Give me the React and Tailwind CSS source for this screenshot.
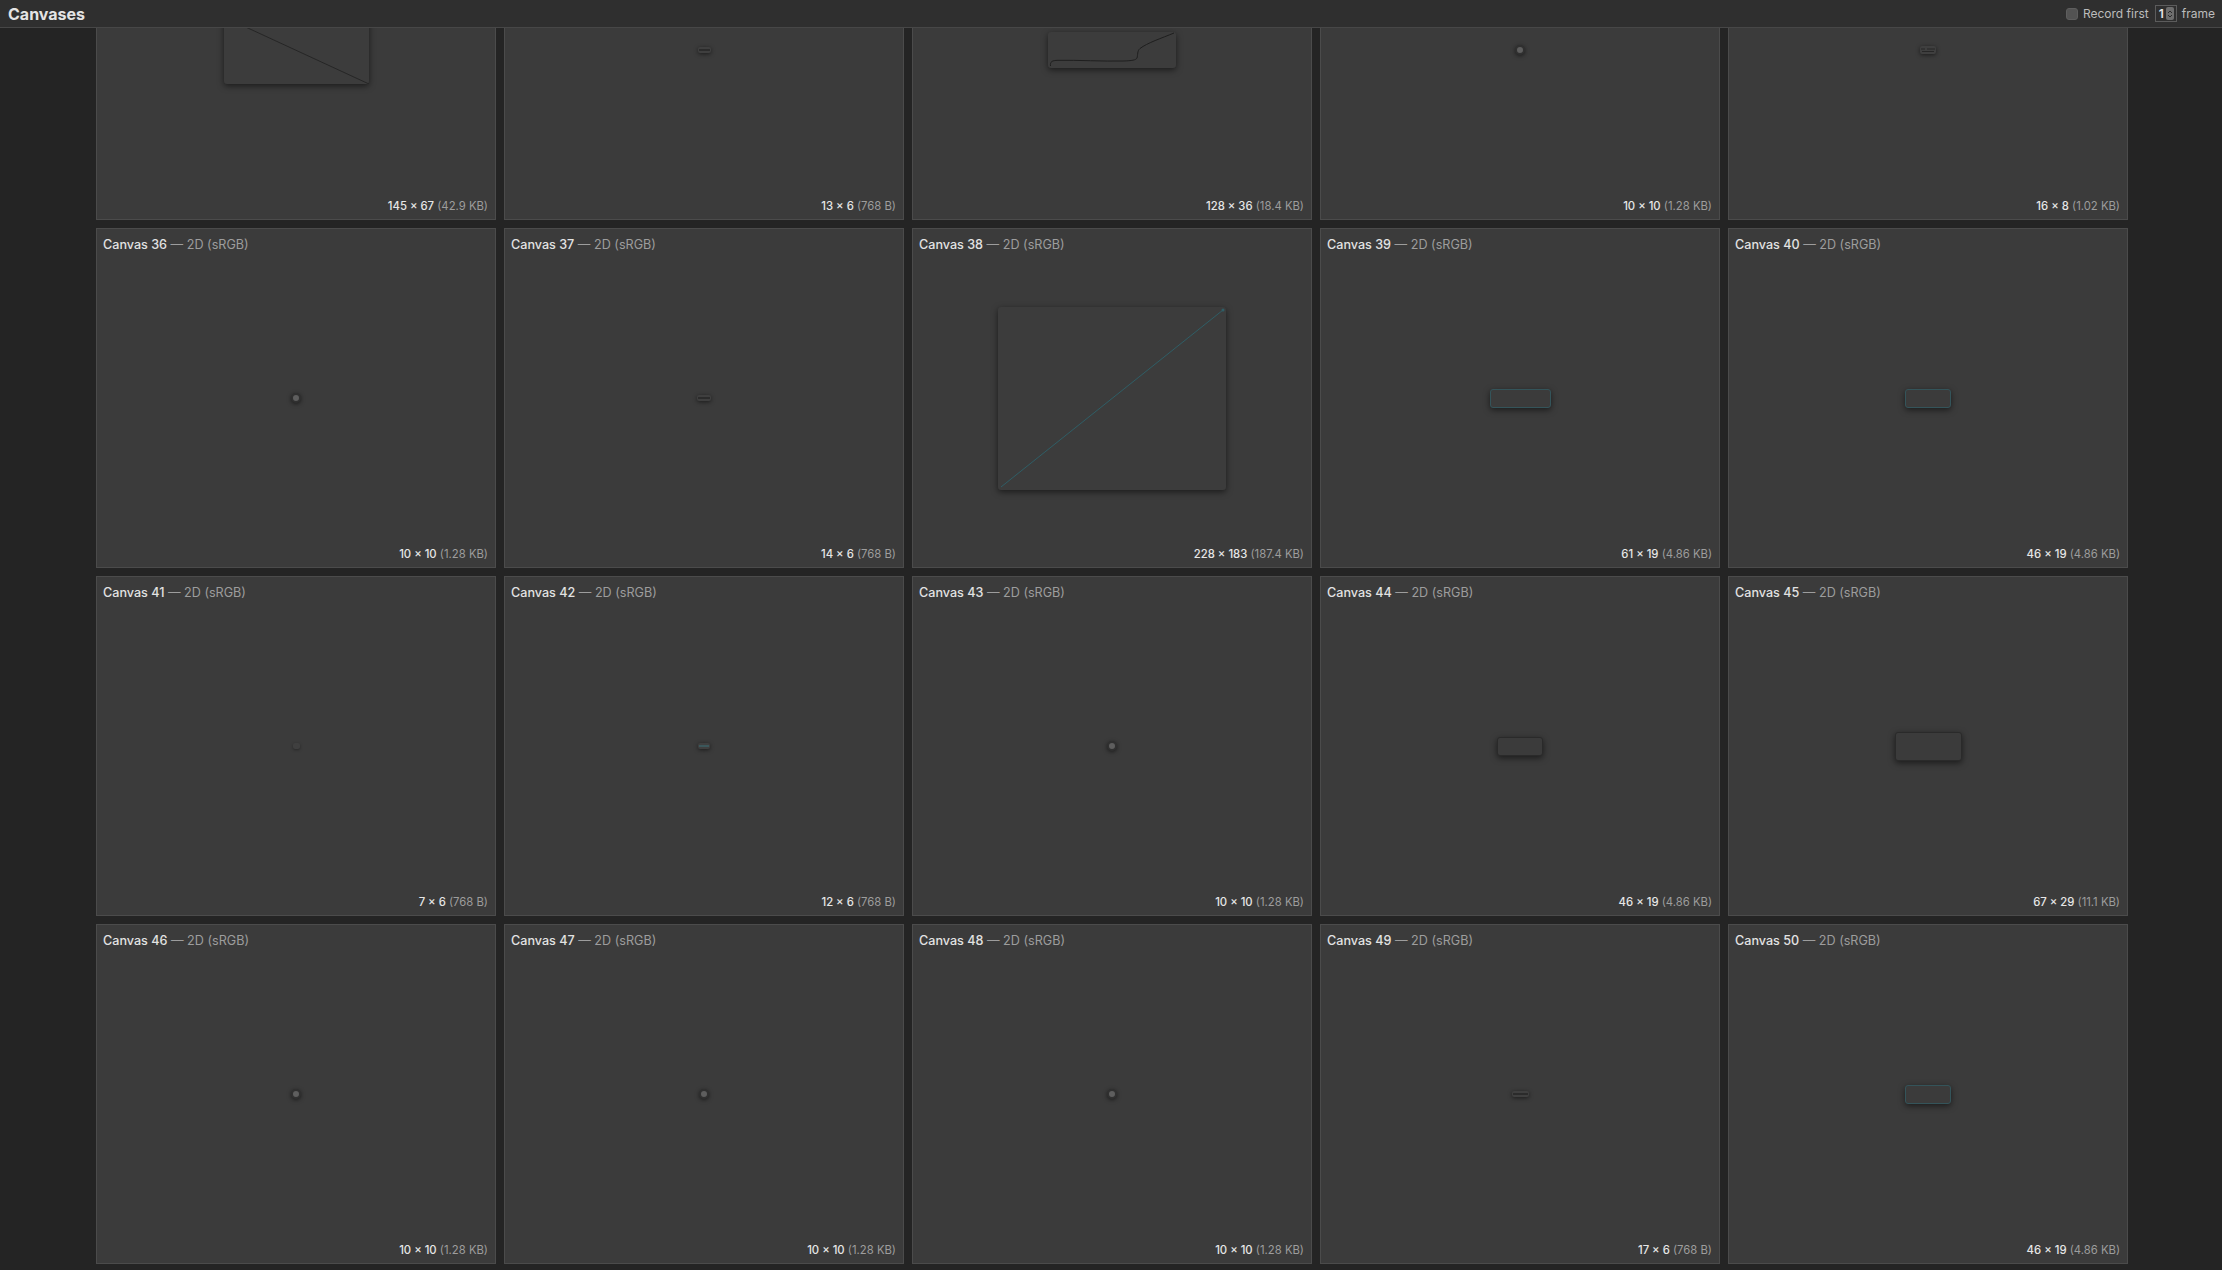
import React from 'react';

const rows = [
  [
    { n: 31, size: '145 × 67', kb: '(42.9 KB)', w: 145, h: 67, kind: 'diag' },
    { n: 32, size: '13 × 6', kb: '(768 B)', w: 13, h: 6, kind: 'dash' },
    { n: 33, size: '128 × 36', kb: '(18.4 KB)', w: 128, h: 36, kind: 'curve' },
    { n: 34, size: '10 × 10', kb: '(1.28 KB)', w: 10, h: 10, kind: 'dot' },
    { n: 35, size: '16 × 8', kb: '(1.02 KB)', w: 16, h: 8, kind: 'dash2' }
  ],
  [
    { n: 36, size: '10 × 10', kb: '(1.28 KB)', w: 10, h: 10, kind: 'dot' },
    { n: 37, size: '14 × 6', kb: '(768 B)', w: 14, h: 6, kind: 'dash' },
    { n: 38, size: '228 × 183', kb: '(187.4 KB)', w: 228, h: 183, kind: 'teal' },
    { n: 39, size: '61 × 19', kb: '(4.86 KB)', w: 61, h: 19, kind: 'boxTeal' },
    { n: 40, size: '46 × 19', kb: '(4.86 KB)', w: 46, h: 19, kind: 'boxTeal' }
  ],
  [
    { n: 41, size: '7 × 6', kb: '(768 B)', w: 7, h: 6, kind: 'faint' },
    { n: 42, size: '12 × 6', kb: '(768 B)', w: 12, h: 6, kind: 'dashTeal' },
    { n: 43, size: '10 × 10', kb: '(1.28 KB)', w: 10, h: 10, kind: 'dot' },
    { n: 44, size: '46 × 19', kb: '(4.86 KB)', w: 46, h: 19, kind: 'boxGray' },
    { n: 45, size: '67 × 29', kb: '(11.1 KB)', w: 67, h: 29, kind: 'boxGray' }
  ],
  [
    { n: 46, size: '10 × 10', kb: '(1.28 KB)', w: 10, h: 10, kind: 'dot' },
    { n: 47, size: '10 × 10', kb: '(1.28 KB)', w: 10, h: 10, kind: 'dot' },
    { n: 48, size: '10 × 10', kb: '(1.28 KB)', w: 10, h: 10, kind: 'dot' },
    { n: 49, size: '17 × 6', kb: '(768 B)', w: 17, h: 6, kind: 'dash' },
    { n: 50, size: '46 × 19', kb: '(4.86 KB)', w: 46, h: 19, kind: 'boxTeal' }
  ]
];

const Preview = ({ c }) => {
  const dims = { width: c.w, height: c.h };

  if (c.kind === 'dot') {
    return (
      <div
        style={dims}
        className="rounded-full bg-[#5e5e5e] border-2 border-[#303030] shadow-[0_1px_4px_rgba(0,0,0,0.55)]"
      />
    );
  }

  if (c.kind === 'faint') {
    return <div style={dims} className="rounded-[2px] bg-[#3f3f3f] shadow-[0_1px_3px_rgba(0,0,0,0.35)]" />;
  }

  if (c.kind === 'dash' || c.kind === 'dashTeal' || c.kind === 'dash2') {
    const line = c.kind === 'dashTeal' ? '#3b6166' : '#262626';
    return (
      <div style={dims} className="rounded-[2px] bg-[#3f3f3f] shadow-[0_1px_4px_rgba(0,0,0,0.55)]">
        <svg width={c.w} height={c.h} viewBox={`0 0 ${c.w} ${c.h}`} className="block">
          {c.kind === 'dash2' ? (
            <>
              <line x1="1" y1="3" x2="5" y2="3" stroke={line} strokeWidth="1" />
              <line x1="7" y1="3" x2="15" y2="3" stroke={line} strokeWidth="1" />
              <line x1="2" y1="5.5" x2="14" y2="5.5" stroke={line} strokeWidth="1" />
            </>
          ) : (
            <line x1="1" y1={c.h / 2} x2={c.w - 1} y2={c.h / 2} stroke={line} strokeWidth="1.5" />
          )}
        </svg>
      </div>
    );
  }

  if (c.kind === 'boxTeal' || c.kind === 'boxGray') {
    const edge = c.kind === 'boxTeal' ? 'border-[#34545a]' : 'border-[#2a2a2a]';
    return (
      <div
        style={dims}
        className={`rounded-[3px] border ${edge} bg-[#3b3b3b] shadow-[0_2px_6px_rgba(0,0,0,0.55)]`}
      />
    );
  }

  return (
    <div style={dims} className="rounded-[3px] bg-[#3c3c3c] shadow-[0_2px_6px_rgba(0,0,0,0.55)]">
      <svg width={c.w} height={c.h} viewBox={`0 0 ${c.w} ${c.h}`} className="block">
        {c.kind === 'diag' && <line x1="0" y1="0" x2={c.w} y2={c.h} stroke="#262626" strokeWidth="1" />}
        {c.kind === 'curve' && (
          <path
            d="M2.5 34 C2 29.5 4 28.5 10 28.3 C30 28 55 29.5 75 29 C84 28.8 88 28 89 26 C90 23 89 19 92 16.5 C99 11 114 6 126 1"
            fill="none"
            stroke="#1e1e1e"
            strokeWidth="1"
          />
        )}
        {c.kind === 'teal' && (
          <>
            <line x1="3" y1={c.h - 3} x2={c.w - 3} y2="3" stroke="#2f5e66" strokeWidth="1" />
            <circle cx={c.w - 3} cy="3" r="1.5" fill="#2f5e66" />
          </>
        )}
      </svg>
    </div>
  );
};

const CanvasCard = ({ c }) => (
  <div className="grid border border-[#4b4b4b] bg-[#3b3b3b]">
    <div className="[grid-area:1/1] self-start pl-[6px] pt-2 text-[12.6px] leading-4">
      <span className="font-medium text-[#e2e2e2]">Canvas {c.n}</span>
      <span className="text-[#9d9d9d]"> — 2D (sRGB)</span>
    </div>
    <div className="[grid-area:1/1] self-center justify-self-center">
      <Preview c={c} />
    </div>
    <div className="[grid-area:1/1] self-end justify-self-end pr-[7px] pb-[5px] text-[11.3px] leading-4">
      <span className="font-medium text-[#e6e6e6]">{c.size}</span>
      <span className="text-[#9d9d9d]"> {c.kb}</span>
    </div>
  </div>
);

export default function App() {
  return (
    <div className="h-[1270px] w-[2222px] overflow-hidden bg-[#242424] font-['Inter','Liberation_Sans',sans-serif]">
      {/* Header */}
      <div className="flex h-[28px] items-center justify-between border-b border-[#474747] bg-[#2f2f2f] pl-2 pr-[7px]">
        <h1 className="text-[16px] font-bold leading-none text-[#e4e4e4]">Canvases</h1>
        <div className="flex items-center text-[12px] text-[#bcbcbc]">
          <span className="mr-[5px] h-[12px] w-[12px] rounded-[3px] border border-[#5e5e5e] bg-[#535353]" />
          <span>Record first</span>
          <div className="ml-[6px] flex h-[17px] items-center gap-[2px] border border-[#5c5c5c] pl-[3px] pr-[2px]">
            <span className="font-semibold text-[#e8e8e8]">1</span>
            <span className="flex h-[13px] w-[8px] flex-col items-center justify-center rounded-[2px] bg-[#6e6e6e]">
              <svg width="6" height="4" viewBox="0 0 6 4"><path d="M1 3 L3 1 L5 3" fill="none" stroke="#2a2a2a" strokeWidth="1" /></svg>
              <svg width="6" height="4" viewBox="0 0 6 4"><path d="M1 1 L3 3 L5 1" fill="none" stroke="#2a2a2a" strokeWidth="1" /></svg>
            </span>
          </div>
          <span className="ml-[5px]">frame</span>
        </div>
      </div>

      {/* Grid, scrolled so the first row sits under the header */}
      <div className="h-[1242px] overflow-hidden">
        <div className="ml-[96px] mt-[-148px] grid grid-cols-[repeat(5,400px)] auto-rows-[340px] gap-2">
          {rows.flat().map((c) => (
            <CanvasCard key={c.n} c={c} />
          ))}
        </div>
      </div>
    </div>
  );
}
